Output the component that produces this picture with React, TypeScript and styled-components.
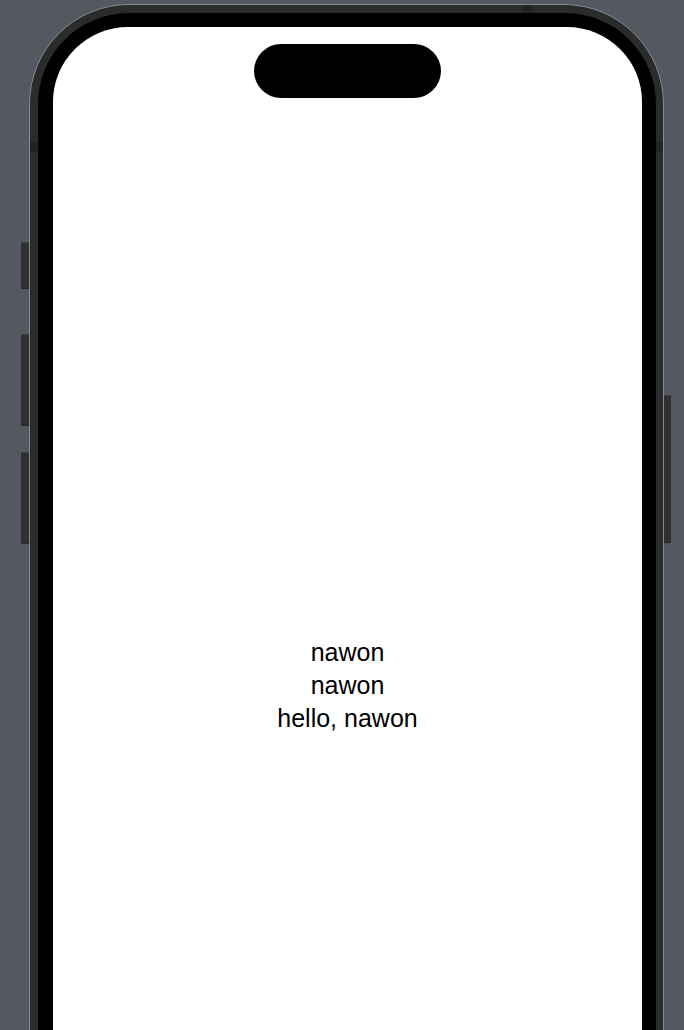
import React from 'react'
import styled, { createGlobalStyle } from 'styled-components'

const GlobalStyle = createGlobalStyle`
  html, body {
    margin: 0;
    padding: 0;
    background: #545961;
  }
  * {
    box-sizing: border-box;
  }
`

const Stage = styled.div`
  height: 1030px;
  overflow: hidden;
  display: flex;
  flex-direction: row;
  align-items: flex-start;
  padding-left: 21px;
  background: #545961;
`

const Rail = styled.div<{ $top: number; $width: number }>`
  flex: 0 0 ${(p) => p.$width}px;
  display: flex;
  flex-direction: column;
  padding-top: ${(p) => p.$top}px;
`

const SideButton = styled.div<{ $height: number; $gap?: number; $side: 'left' | 'right' }>`
  height: ${(p) => p.$height}px;
  margin-top: ${(p) => p.$gap || 0}px;
  background: #303030;
  border-top: 1px solid #3f3f3f;
  border-bottom: 1px solid #262626;
  border-radius: ${(p) => (p.$side === 'left' ? '1px 0 0 1px' : '0 1px 1px 0')};
`

const Phone = styled.div`
  position: relative;
  flex: 0 0 635px;
  margin-top: 4px;
  height: 1340px;
  border: 1px solid #868a8f;
  border-radius: 100px;
  background: #2b2b2b;
  padding: 8px 7px 8px 8px;
  display: flex;
`

// small darker antenna cuts in the steel band
const AntennaBand = styled.div<{ $edge: 'left' | 'right' | 'top' }>`
  position: absolute;
  background: #222;
  ${(p) =>
    p.$edge === 'top'
      ? 'top: 0; left: 492px; width: 10px; height: 8px;'
      : `top: 137px; ${p.$edge}: 0; width: ${p.$edge === 'left' ? 8 : 7}px; height: 10px;`}
`

const BlackBezel = styled.div`
  flex: 1;
  display: flex;
  flex-direction: column;
  background: #000;
  border-radius: 91px;
  padding: 14px 14px 14px 15px;
`

const Screen = styled.div`
  height: 1278px;
  background: #fff;
  border-radius: 75px;
  display: flex;
  flex-direction: column;
  align-items: center;
  padding-top: 17px;
`

const Island = styled.div`
  width: 187px;
  height: 54px;
  border-radius: 27px;
  background: #000;
  flex: 0 0 auto;
`

const SafeArea = styled.div`
  flex: 1;
  width: 100%;
  display: flex;
  flex-direction: column;
  align-items: center;
  justify-content: center;
  margin-top: 17px;
  padding-bottom: 49px;
`

const Label = styled.div`
  font-family: 'Liberation Sans', Arial, sans-serif;
  font-size: 25px;
  line-height: 33px;
  color: #000;
  text-align: center;
`

export default function App() {
  const name = 'nawon'
  return (
    <>
      <GlobalStyle />
      <Stage>
        <Rail $top={242} $width={8}>
          <SideButton $side="left" $height={47} />
          <SideButton $side="left" $height={92} $gap={45} />
          <SideButton $side="left" $height={92} $gap={26} />
        </Rail>
        <Phone>
          <AntennaBand $edge="left" />
          <AntennaBand $edge="right" />
          <AntennaBand $edge="top" />
          <BlackBezel>
            <Screen>
              <Island />
              <SafeArea>
                <Label>{name}</Label>
                <Label>{name}</Label>
                <Label>hello, {name}</Label>
              </SafeArea>
            </Screen>
          </BlackBezel>
        </Phone>
        <Rail $top={395} $width={7}>
          <SideButton $side="right" $height={148} />
        </Rail>
      </Stage>
    </>
  )
}
